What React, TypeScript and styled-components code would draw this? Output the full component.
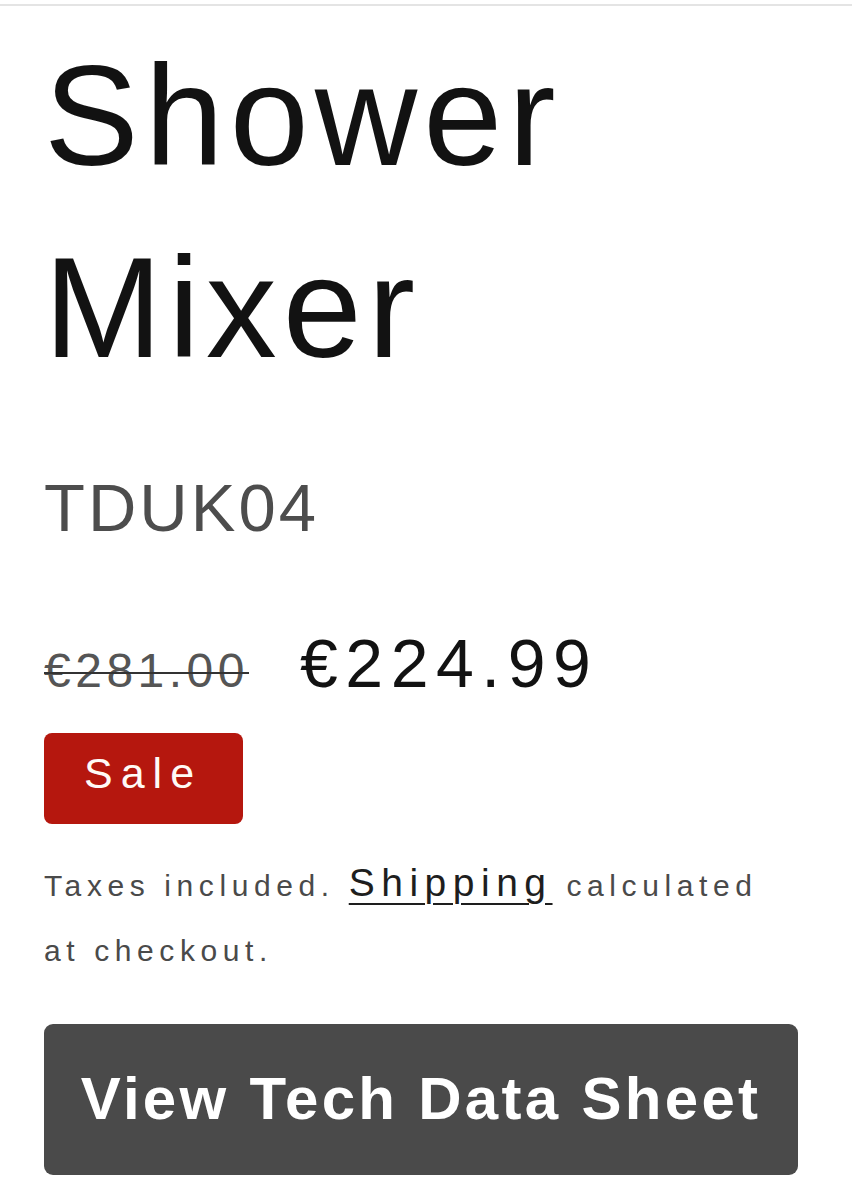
import React from 'react';
import styled, { createGlobalStyle } from 'styled-components';

const GlobalStyle = createGlobalStyle`
  html, body {
    margin: 0;
    padding: 0;
    background: #ffffff;
  }
  body {
    font-family: 'Liberation Sans', Arial, sans-serif;
    color: #121212;
  }
`;

const Page = styled.div`
  padding-top: 4px;
  width: 852px;
  min-height: 1200px;
  box-sizing: border-box;
`;

const Divider = styled.hr`
  margin: 0;
  border: 0;
  border-top: 2px solid #e4e4e4;
`;

const ProductInfo = styled.section`
  display: flex;
  flex-direction: column;
  align-items: flex-start;
  padding: 0 54px 0 44px;
`;

const Title = styled.h1`
  margin: 14px 0 0;
  font-size: 142px;
  font-weight: 400;
  line-height: 192px;
  letter-spacing: 6px;
  color: #121212;
`;

const Sku = styled.p`
  margin: 60px 0 0;
  font-size: 67px;
  line-height: 87px;
  letter-spacing: 3px;
  color: #4d4d4d;
`;

const PriceRow = styled.div`
  display: flex;
  align-items: baseline;
  gap: 51px;
  margin-top: 72px;
`;

const ComparePrice = styled.s`
  font-size: 48px;
  line-height: 80px;
  letter-spacing: 4.5px;
  color: #555555;
  text-decoration-thickness: 2px;
  text-decoration-color: #333333;
`;

const SalePrice = styled.span`
  font-size: 68px;
  line-height: 80px;
  letter-spacing: 7.5px;
  color: #121212;
`;

const Badge = styled.span`
  margin-top: 22px;
  padding: 16px 41px 27px 40px;
  font-size: 43px;
  line-height: 48px;
  letter-spacing: 8px;
  color: #fffaf6;
  background: #b5170e;
  border-radius: 8px;
`;

const TaxNote = styled.p`
  margin: 29px 0 0;
  max-width: 740px;
  font-size: 30px;
  line-height: 65px;
  letter-spacing: 5.6px;
  color: #4a4a4a;
`;

const TaxLink = styled.a`
  font-size: 39px;
  line-height: 40px;
  letter-spacing: 6.5px;
  color: #1e1e1e;
  text-decoration: underline;
  text-decoration-thickness: 2px;
  text-underline-offset: 7px;
`;

const SheetButton = styled.button`
  margin-top: 41px;
  width: 754px;
  padding: 40px 0 41px;
  border: 0;
  border-radius: 9px;
  background: #4a4a4a;
  color: #ffffff;
  font-family: 'Liberation Sans', Arial, sans-serif;
  font-size: 60px;
  font-weight: 700;
  line-height: 70px;
  letter-spacing: 3.3px;
  text-align: center;
  cursor: pointer;
`;

export default function App(): JSX.Element {
  return (
    <>
      <GlobalStyle />
      <Page>
        <Divider />
        <ProductInfo>
          <Title>
            Shower
            <br />
            Mixer
          </Title>
          <Sku>TDUK04</Sku>
          <PriceRow>
            <ComparePrice>€281.00</ComparePrice>
            <SalePrice>€224.99</SalePrice>
          </PriceRow>
          <Badge>Sale</Badge>
          <TaxNote>
            <span>Taxes included.</span> <TaxLink href="#">Shipping</TaxLink>{' '}
            <span>calculated</span> <span>at checkout.</span>
          </TaxNote>
          <SheetButton>View Tech Data Sheet</SheetButton>
        </ProductInfo>
      </Page>
    </>
  );
}
